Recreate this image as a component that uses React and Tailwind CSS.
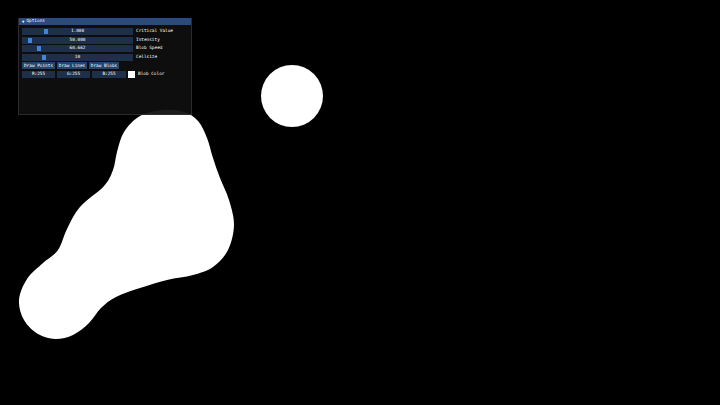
import React from "react";

const pts = [
  [163,110],[140,116],[124,132],[117,152],[113,170],[104,186],[80,207],[67,229],[58,250],[43,263],[27,279],[19,300],[24,320],[38,334],[55,339],[73,335],[89,323],[101,308],[116,297],[140,288],[167,280],[193,275],[213,267],[228,250],[234,225],[229,200],[220,178],[213,158],[207,138],[198,121],[184,112]
];

function smoothPath(p) {
  const n = p.length;
  let d = `M${p[0][0]},${p[0][1]}`;
  for (let i = 0; i < n; i++) {
    const p0 = p[(i - 1 + n) % n], p1 = p[i], p2 = p[(i + 1) % n], p3 = p[(i + 2) % n];
    const c1x = p1[0] + (p2[0] - p0[0]) / 6, c1y = p1[1] + (p2[1] - p0[1]) / 6;
    const c2x = p2[0] - (p3[0] - p1[0]) / 6, c2y = p2[1] - (p3[1] - p1[1]) / 6;
    d += ` C${c1x.toFixed(1)},${c1y.toFixed(1)} ${c2x.toFixed(1)},${c2y.toFixed(1)} ${p2[0]},${p2[1]}`;
  }
  return d + "Z";
}

function Slider({ value, grab, label }) {
  return (
    <div className="flex items-center h-[7px]">
      <div className="relative w-[111px] h-full bg-[#1d2f49] flex items-center justify-center">
        <div className="absolute top-[1px] bottom-[1px] w-[4px] bg-[#3d85e0]" style={{ left: grab }} />
        <span className="relative">{value}</span>
      </div>
      <span className="ml-[3px]">{label}</span>
    </div>
  );
}

export default function App() {
  return (
    <div className="relative w-[720px] h-[405px] bg-black overflow-hidden">
      <svg className="absolute left-0 top-0" width="720" height="405" viewBox="0 0 720 405">
        <path d={smoothPath(pts)} fill="#ffffff" />
        <circle cx="292" cy="96" r="31" fill="#ffffff" />
      </svg>
      <div
        className="absolute left-[18px] top-[18px] w-[174px] h-[97px] bg-[#0f0f0f]/[0.94] border-r border-b border-l border-[#2a2a30] text-white text-[4.4px] leading-none flex flex-col"
        style={{ fontFamily: '"DejaVu Sans Mono", "Liberation Mono", monospace' }}
      >
        <div className="h-[7px] bg-[#294a7a] flex items-center pl-[3px] gap-[2px]">
          <span className="text-[4px]">▼</span>
          <span>Options</span>
        </div>
        <div className="flex flex-col gap-[1.6px] pl-[3px] pt-[3px]">
          <Slider value="1.000" grab={22} label="Critical Value" />
          <Slider value="50.000" grab={6} label="Intensity" />
          <Slider value="60.662" grab={15} label="Blob Speed" />
          <Slider value="10" grab={20} label="Cellsize" />
          <div className="flex h-[7px] gap-[2px]">
            <div className="w-[33px] bg-[#24456d] flex items-center justify-center">Draw Points</div>
            <div className="w-[30px] bg-[#24456d] flex items-center justify-center">Draw Lines</div>
            <div className="w-[30px] bg-[#24456d] flex items-center justify-center">Draw Blobs</div>
          </div>
          <div className="flex items-center h-[7px]">
            <div className="w-[33px] h-full bg-[#1d2f49] flex items-center justify-center">R:255</div>
            <div className="w-[33px] h-full ml-[2px] bg-[#1d2f49] flex items-center justify-center">G:255</div>
            <div className="w-[34px] h-full ml-[2px] bg-[#1d2f49] flex items-center justify-center">B:255</div>
            <div className="w-[7px] h-full ml-[2px] bg-white" />
            <span className="ml-[3px]">Blob Color</span>
          </div>
        </div>
      </div>
    </div>
  );
}
